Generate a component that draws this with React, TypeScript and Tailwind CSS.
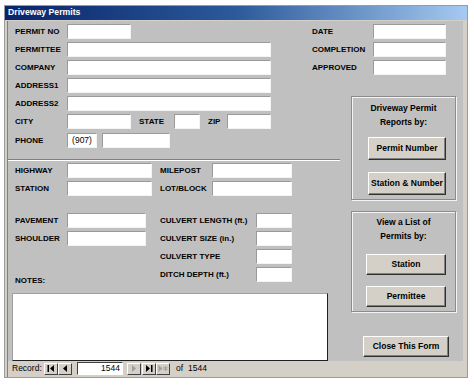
import React from "react";

const font = "font-['Liberation_Sans',Arial,sans-serif]";
const lbl = "text-[8px] font-bold text-black leading-[15px] whitespace-nowrap";
const box =
  "h-[15px] bg-white border border-t-[#9a9a9a] border-l-[#9a9a9a] border-r-[#f4f4f4] border-b-[#f4f4f4]";
const btn =
  "flex items-center justify-center bg-[#d4d0c8] border border-t-white border-l-white border-r-[#303030] border-b-[#303030] shadow-[inset_-1px_-1px_0_#808080] text-[8.5px] font-bold text-black";
const group =
  "ml-[11px] w-[105px] border border-[#8c8c8c] shadow-[inset_1px_1px_0_#f4f4f4,1px_1px_0_#f4f4f4] flex flex-col";

const Row = ({ label, lw, w }: { label: string; lw: number; w: number }) => (
  <div className="flex h-[15px]">
    <div className={lbl} style={{ width: lw }}>
      {label}
    </div>
    <div className={box} style={{ width: w }} />
  </div>
);

const NavBtn = ({ children }: { children: React.ReactNode }) => (
  <div className="w-[14px] h-[12px] bg-[#d4d0c8] border border-t-white border-l-white border-r-[#404040] border-b-[#404040] flex items-center justify-center">
    {children}
  </div>
);

export default function App() {
  return (
    <div className={`${font} pt-[5px] pl-[4px] bg-white min-h-screen`}>
      <div className="w-[464px] border border-[#9a9a9a] bg-[#d4d0c8] flex flex-col">
        {/* title bar */}
        <div className="h-[14px] bg-gradient-to-r from-[#0a246a] via-[#2c5a9a] to-[#a6caf0] pl-[3px] flex items-center text-white text-[8.7px] font-bold">
          Driveway Permits
        </div>

        <div className="mt-[1px] ml-[2px] mr-[4px] border-l border-[#808080] flex flex-col">
          {/* form body */}
          <div className="h-[340px] bg-[#c0c0c0] flex">
            {/* left column */}
            <div className="w-[332px] flex flex-col">
              <div className="pt-[3px] pl-[7px] flex flex-col gap-[3px]">
                <Row label="PERMIT NO" lw={52} w={64} />
                <Row label="PERMITTEE" lw={52} w={204} />
                <Row label="COMPANY" lw={52} w={204} />
                <Row label="ADDRESS1" lw={52} w={204} />
                <Row label="ADDRESS2" lw={52} w={204} />
                <div className="flex h-[15px]">
                  <div className={`${lbl} w-[52px]`}>CITY</div>
                  <div className={`${box} w-[64px]`} />
                  <div className={`${lbl} w-[35px] ml-[8px]`}>STATE</div>
                  <div className={`${box} w-[26px]`} />
                  <div className={`${lbl} w-[19px] ml-[8px]`}>ZIP</div>
                  <div className={`${box} w-[44px]`} />
                </div>
                <div className="flex h-[15px] mt-[1px]">
                  <div className={`${lbl} w-[52px]`}>PHONE</div>
                  <div className={`${box} w-[30px] text-[8.5px] leading-[13px] text-center text-black`}>(907)</div>
                  <div className={`${box} w-[68px] ml-[5px]`} />
                </div>
              </div>

              {/* separator */}
              <div className="mt-[11px] h-[2px] border-t border-[#808080] border-b border-b-white" />

              <div className="mt-[2px] pl-[7px] flex flex-col gap-[3px]">
                <div className="flex h-[15px]">
                  <Row label="HIGHWAY" lw={52} w={85} />
                  <div className="ml-[8px]">
                    <Row label="MILEPOST" lw={52} w={80} />
                  </div>
                </div>
                <div className="flex h-[15px]">
                  <Row label="STATION" lw={52} w={85} />
                  <div className="ml-[8px]">
                    <Row label="LOT/BLOCK" lw={52} w={80} />
                  </div>
                </div>
              </div>

              <div className="mt-[17px] pl-[7px] flex">
                <div className="w-[145px] flex flex-col gap-[3px]">
                  <Row label="PAVEMENT" lw={52} w={79} />
                  <Row label="SHOULDER" lw={52} w={79} />
                  <div className="mt-auto -mb-[4px] text-[8px] font-bold leading-[11px]">NOTES:</div>
                </div>
                <div className="flex flex-col gap-[3px]">
                  <Row label="CULVERT LENGTH (ft.)" lw={96} w={36} />
                  <Row label="CULVERT SIZE (in.)" lw={96} w={36} />
                  <Row label="CULVERT TYPE" lw={96} w={36} />
                  <Row label="DITCH DEPTH (ft.)" lw={96} w={36} />
                </div>
              </div>

              {/* notes */}
              <div className="mt-[11px] ml-[4px] w-[316px] flex-1 bg-white border border-t-[#a0a0a0] border-l-[#a0a0a0] border-r-[#202020] border-b-[#202020]" />
            </div>

            {/* right column */}
            <div className="w-[123px] flex flex-col">
              <div className="pt-[3px] -ml-[28px] flex flex-col gap-[3px]">
                <Row label="DATE" lw={61} w={73} />
                <Row label="COMPLETION" lw={61} w={73} />
                <Row label="APPROVED" lw={61} w={73} />
              </div>

              <div className={`${group} mt-[21px] h-[104px]`}>
                <div className="mt-[4px] text-center text-[8.5px] font-bold leading-[14px]">
                  Driveway Permit
                  <br />
                  Reports by:
                </div>
                <div className={`${btn} mt-[8px] ml-[16px] w-[78px] h-[23px]`}>Permit Number</div>
                <div className={`${btn} mt-[12px] ml-[16px] w-[78px] h-[23px]`}>Station &amp; Number</div>
              </div>

              <div className={`${group} mt-[11px] h-[101px]`}>
                <div className="mt-[3px] text-center text-[8.5px] font-bold leading-[14px]">
                  View a List of
                  <br />
                  Permits by:
                </div>
                <div className={`${btn} mt-[11px] ml-[14px] w-[80px] h-[21px]`}>Station</div>
                <div className={`${btn} mt-[11px] ml-[14px] w-[80px] h-[21px]`}>Permittee</div>
              </div>

              <div className={`${btn} mt-[24px] ml-[23px] w-[86px] h-[21px]`}>Close This Form</div>
            </div>
          </div>

          {/* record navigation bar */}
          <div className="h-[15px] bg-[#d4d0c8] flex items-center pl-[4px] text-[8.5px] text-black">
            <span className="w-[32px]">Record:</span>
            <NavBtn>
              <svg width="8" height="7" viewBox="0 0 8 7">
                <rect x="0.5" y="0" width="1.5" height="7" fill="#000" />
                <path d="M7 0 L3 3.5 L7 7 Z" fill="#000" />
              </svg>
            </NavBtn>
            <NavBtn>
              <svg width="6" height="7" viewBox="0 0 6 7">
                <path d="M5 0 L1 3.5 L5 7 Z" fill="#000" />
              </svg>
            </NavBtn>
            <div className="ml-[5px] w-[46px] h-[13px] bg-white border border-t-[#404040] border-l-[#404040] border-r-white border-b-white text-right pr-[2px] leading-[11px]">
              1544
            </div>
            <div className="ml-[4px]">
              <NavBtn>
                <svg width="6" height="7" viewBox="0 0 6 7">
                  <path d="M1 0 L5 3.5 L1 7 Z" fill="#a0a0a0" />
                </svg>
              </NavBtn>
            </div>
            <div className="ml-[1px]">
              <NavBtn>
                <svg width="8" height="7" viewBox="0 0 8 7">
                  <path d="M1 0 L5 3.5 L1 7 Z" fill="#000" />
                  <rect x="6" y="0" width="1.5" height="7" fill="#000" />
                </svg>
              </NavBtn>
            </div>
            <NavBtn>
              <svg width="10" height="7" viewBox="0 0 10 7">
                <path d="M0.5 0 L4.5 3.5 L0.5 7 Z" fill="#a0a0a0" />
                <path d="M7.5 1 V6 M5.3 2.2 L9.7 4.8 M5.3 4.8 L9.7 2.2" stroke="#a0a0a0" strokeWidth="1" />
              </svg>
            </NavBtn>
            <span className="ml-[6px]">of</span>
            <span className="ml-[5px]">1544</span>
          </div>
          <div className="h-[1px]" />
        </div>
      </div>
    </div>
  );
}
